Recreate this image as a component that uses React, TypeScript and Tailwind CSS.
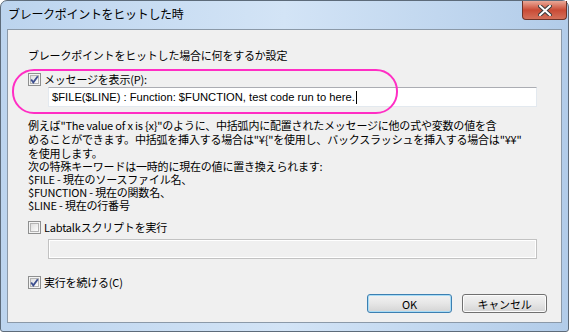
import React from 'react'

const jp = { fontFamily: '"Noto Sans CJK JP", "Liberation Sans", sans-serif' }

function Check({ checked }: { checked: boolean }) {
  return (
    <svg width="13" height="13" viewBox="0 0 13 13" className="shrink-0">
      <defs>
        <linearGradient id="cbg" x1="0" y1="0" x2="1" y2="1">
          <stop offset="0" stopColor="#dcdcdc" />
          <stop offset="1" stopColor="#ffffff" />
        </linearGradient>
      </defs>
      <rect x="0.5" y="0.5" width="12" height="12" fill="#f4f4f4" stroke="#8e8f8f" />
      <rect x="2.5" y="2.5" width="8" height="8" fill="url(#cbg)" stroke="#b4b4b4" />
      {checked && (
        <path d="M3.2 6.4 L5.3 9.4 L9.8 3.2" fill="none" stroke="#3d4f8f" strokeWidth="1.8" />
      )}
    </svg>
  )
}

function Row({ checked, label }: { checked: boolean; label: string }) {
  return (
    <div className="flex items-center h-[14px] gap-[3px]">
      <Check checked={checked} />
      <span className="text-[11px] leading-[14px]">{label}</span>
    </div>
  )
}

function Button({ label, primary }: { label: string; primary?: boolean }) {
  return (
    <div
      className={`w-[85px] h-[19px] rounded-[3px] border flex items-center justify-center text-[11px] bg-gradient-to-b from-[#f2f2f2] via-[#e6e6e6] to-[#d4d4d4] ${
        primary ? 'border-[#3c7fb1] shadow-[inset_0_0_0_1px_#a8dcf6]' : 'border-[#707070] shadow-[inset_0_0_0_1px_#fcfcfc]'
      }`}
    >
      {label}
    </div>
  )
}

export default function App() {
  return (
    <div className="w-[569px] h-[332px] bg-white text-black" style={jp}>
      <div className="w-full h-full rounded-t-[7px] rounded-b-[3px] border border-[#5d6b7a] bg-gradient-to-r from-[#bcd4ee] via-[#d3e4f6] to-[#b2cce9] flex flex-col relative">
        {/* title bar */}
        <div className="h-[28px] flex items-center justify-between pl-[7px] pr-[1px]">
          <span className="text-[12px] tracking-[-0.3px] pb-[2px]">ブレークポイントをヒットした時</span>
          <div className="self-start w-[45px] h-[19px] rounded-b-[4px] border border-t-0 border-[#6e3328] bg-gradient-to-b from-[#e9a898] via-[#c94a35] to-[#d4705a] flex items-center justify-center">
            <svg width="14" height="11" viewBox="0 0 14 11">
              <path d="M2 1 L12 10 M12 1 L2 10" stroke="#3b3b3b" strokeWidth="4" strokeLinecap="square" />
              <path d="M2 1 L12 10 M12 1 L2 10" stroke="#ffffff" strokeWidth="2" strokeLinecap="square" />
            </svg>
          </div>
        </div>

        {/* client area */}
        <div className="mx-[6px] flex-1 border border-[#8b99a8] bg-[#f0f0f0] flex flex-col pl-[20px] text-[11px] leading-[14px] tracking-[-0.2px]">
          <div className="mt-[18px]">ブレークポイントをヒットした場合に何をするか設定</div>
          <div className="mt-[10px]">
            <Row checked label="メッセージを表示(P):" />
          </div>
          <div
            className="mt-[1px] ml-[20px] w-[489px] h-[20px] bg-white border border-[#e3e9ef] border-t-[#abadb3] flex items-center pl-[3px] text-[11.2px] tracking-normal"
            style={{ fontFamily: '"Liberation Sans", sans-serif' }}
          >
            $FILE($LINE) : Function: $FUNCTION, test code run to here.
            <span className="inline-block w-[1px] h-[13px] bg-black ml-[1px]" />
          </div>

          <div className="mt-[11px] whitespace-nowrap">
            <div>例えば"The value of x is {'{x}'}"のように、中括弧内に配置されたメッセージに他の式や変数の値を含</div>
            <div>めることができます。中括弧を挿入する場合は"¥{'{'}"を使用し、バックスラッシュを挿入する場合は"¥¥"</div>
            <div>を使用します。</div>
          </div>

          <div className="leading-[13px] whitespace-nowrap">
            <div>次の特殊キーワードは一時的に現在の値に置き換えられます:</div>
            <div>$FILE - 現在のソースファイル名、</div>
            <div>$FUNCTION - 現在の関数名、</div>
            <div>$LINE - 現在の行番号</div>
          </div>

          <div className="mt-[8px]">
            <Row checked={false} label="Labtalkスクリプトを実行" />
          </div>
          <div className="mt-[5px] ml-[20px] w-[489px] h-[20px] bg-[#f0f0f0] border border-[#c2c2c2] shadow-[inset_0_0_0_1px_#ffffff]" />

          <div className="mt-[16px]">
            <Row checked label="実行を続ける(C)" />
          </div>

          <div className="mt-[5px] flex justify-end gap-[10px] pr-[14px]">
            <Button label="OK" primary />
            <Button label="キャンセル" />
          </div>
        </div>
        <div className="h-[8px]" />

        {/* annotation */}
        <div className="absolute left-[11px] top-[68px] w-[386px] h-[45px] rounded-[22px] border-2 border-[#ff2ec4] pointer-events-none" />
      </div>
    </div>
  )
}
